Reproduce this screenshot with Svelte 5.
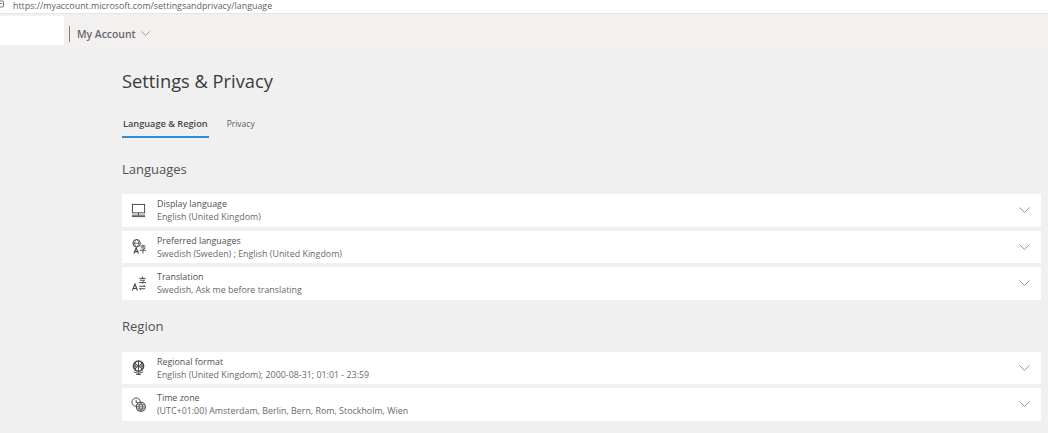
<script>
	const languages = [
		{ icon: 'display', title: 'Display language', value: 'English (United Kingdom)' },
		{ icon: 'preferred', title: 'Preferred languages', value: 'Swedish (Sweden) ; English (United Kingdom)' },
		{ icon: 'translate', title: 'Translation', value: 'Swedish, Ask me before translating' }
	];
	const region = [
		{ icon: 'format', title: 'Regional format', value: 'English (United Kingdom); 2000-08-31; 01:01 - 23:59' },
		{ icon: 'zone', title: 'Time zone', value: '(UTC+01:00) Amsterdam, Berlin, Bern, Rom, Stockholm, Wien' }
	];
</script>

{#snippet icon(name)}
	<svg class="icon" viewBox="0 0 16 16" fill="none" stroke="currentColor" stroke-width="1">
		{#if name === 'display'}
			<rect x="1.500" y="1.500" width="13" height="9" />
			<path d="M8 10.500v2.500M1 13h14M1 14.500h14" />
		{:else if name === 'preferred'}
			<circle cx="6" cy="4.500" r="4" />
			<path d="M2 4.500h8M6 .5c-3 2.500-3 5.500 0 8M6 .5c3 2.500 3 5.500 0 8" stroke-width="0.800" />
			<path d="M3 15.500l2.500-6 2.500 6M4 13.500h3" stroke-width="1.200" />
			<path d="M10 7.500h5.500M12.700 6v2M10.500 9.500h4.500l-2.300 2v4M9.500 12h6.500" />
		{:else if name === 'translate'}
			<path d="M1.500 15.500l2.700-7 2.700 7M2.500 13.300h3.400" stroke-width="1.200" />
			<path d="M9 2.500h6.500M12.200 .5v2M9.500 4.500h5l-2.300 2v1.500M8.500 7h7.500" />
			<path d="M9 11h6l-1.500-1.500M15 13.500H9l1.500 1.500" />
		{:else if name === 'format'}
			<circle cx="8" cy="6.500" r="5.500" stroke-width="1.500" />
			<path d="M3.500 3l9 7M12.500 3l-9 7M8 1v11M2.500 6.500h11M5 2.500c-1 3-1 5 0 8M11 2.500c1 3 1 5 0 8" stroke-width="1" />
			<path d="M3 12.500c2.500 2 7.500 2 10 0M8 13.500v2M5.500 15.500h5" />
		{:else}
			<circle cx="5.500" cy="5.500" r="4.500" />
			<path d="M5.500 3v3h2.500" />
			<circle cx="10.500" cy="10.500" r="4.800" fill="#fff" stroke-width="1.100" />
			<path d="M6 10.500h9M10.500 6c-2.500 2.500-2.500 6.500 0 9M10.500 6c2.500 2.500 2.500 6.500 0 9M6.800 8.300h7.400M6.800 12.700h7.400" stroke-width="0.900" />
		{/if}
	</svg>
{/snippet}

{#snippet row(item)}
	<div class="card">
		{@render icon(item.icon)}
		<div class="text">
			<div class="title">{item.title}</div>
			<div class="value">{item.value}</div>
		</div>
		<svg class="chevron" viewBox="0 0 11 6" fill="none" stroke="currentColor" stroke-width="1">
			<path d="M.4 .4L5.500 5.400l5.100-5" />
		</svg>
	</div>
{/snippet}

<div class="page">
	<div class="urlbar">
		<svg class="page-icon" viewBox="0 0 4 8" fill="none" stroke="currentColor" stroke-width="0.800">
			<path d="M0 1h2.500a1 1 0 0 1 1 1v4a1 1 0 0 1-1 1H0M0 3.500h2" />
		</svg>
		<span>https://myaccount.microsoft.com/settingsandprivacy/language</span>
	</div>

	<header class="header">
		<div class="logo"></div>
		<div class="divider"></div>
		<span class="brand">My Account</span>
		<svg class="brand-chevron" viewBox="0 0 9 5" fill="none" stroke="currentColor" stroke-width="0.800">
			<path d="M.3 .4L4.500 4.500 8.700 .4" />
		</svg>
	</header>

	<main class="main">
		<h1>Settings &amp; Privacy</h1>

		<nav class="tabs">
			<span class="tab active">Language &amp; Region</span>
			<span class="tab">Privacy</span>
		</nav>

		<h2 class="languages">Languages</h2>
		<section class="list">
			{#each languages as item}
				{@render row(item)}
			{/each}
		</section>

		<h2 class="region">Region</h2>
		<section class="list">
			{#each region as item}
				{@render row(item)}
			{/each}
		</section>
	</main>
</div>

<style>
	:global(body) {
		margin: 0;
		background: #f0f0f0;
		font-family: 'Open Sans', 'Noto Sans', sans-serif;
		color: #323130;
	}

	.page {
		height: 433px;
		overflow: hidden;
	}

	.urlbar {
		display: flex;
		align-items: flex-start;
		gap: 9px;
		height: 13px;
		background: #fff;
		border-bottom: 1px solid #e6e6e6;
		font-size: 8.900px;
		line-height: 11px;
		color: #5f5f5f;
	}

	.page-icon {
		width: 4px;
		height: 8px;
		color: #555;
	}

	.header {
		display: flex;
		align-items: center;
		height: 33px;
		padding-top: 3px;
		background: #f2f1f0;
	}

	.logo {
		width: 64px;
		height: 29px;
		margin-top: -6px;
		background: #fff;
	}

	.divider {
		width: 1px;
		height: 16px;
		margin: 0 7px 0 5px;
		background: #808080;
	}

	.brand {
		font-size: 10.400px;
		font-weight: 600;
		color: #69676a;
	}

	.brand-chevron {
		width: 9px;
		height: 5px;
		margin-left: 5px;
		color: #8a8886;
	}

	.main {
		padding: 0 7px 0 122px;
	}

	h1 {
		margin: 19px 0 0;
		font-size: 18.300px;
		line-height: 24px;
		font-weight: 400;
		color: #3b3a39;
	}

	.tabs {
		display: flex;
		gap: 17px;
		margin-top: 25px;
	}

	.tab {
		padding: 0 1px 6px;
		border-bottom: 2px solid transparent;
		font-size: 8.500px;
		line-height: 12px;
		color: #5f5d5b;
	}

	.active {
		font-size: 9.200px;
		font-weight: 600;
		color: #484644;
		border-bottom-color: #2f8fdb;
	}

	h2 {
		margin: 0;
		font-size: 13px;
		line-height: 18px;
		font-weight: 400;
		color: #525050;
	}

	.languages {
		margin-top: 22px;
		margin-bottom: 16px;
	}

	.region {
		margin-top: 17px;
		margin-bottom: 17px;
	}

	.list {
		display: flex;
		flex-direction: column;
		gap: 4px;
	}

	.card {
		display: flex;
		align-items: center;
		height: 32.500px;
		background: #fff;
	}

	.icon {
		width: 15px;
		height: 15px;
		margin: 0 11px 0 9px;
		flex: none;
		color: #454545;
	}

	.text {
		flex: 1;
		font-size: 8.900px;
		line-height: 13px;
	}

	.title {
		color: #525050;
	}

	.value {
		color: #6b6967;
	}

	.chevron {
		width: 11px;
		height: 6px;
		margin-right: 11px;
		color: #9a9896;
	}
</style>
